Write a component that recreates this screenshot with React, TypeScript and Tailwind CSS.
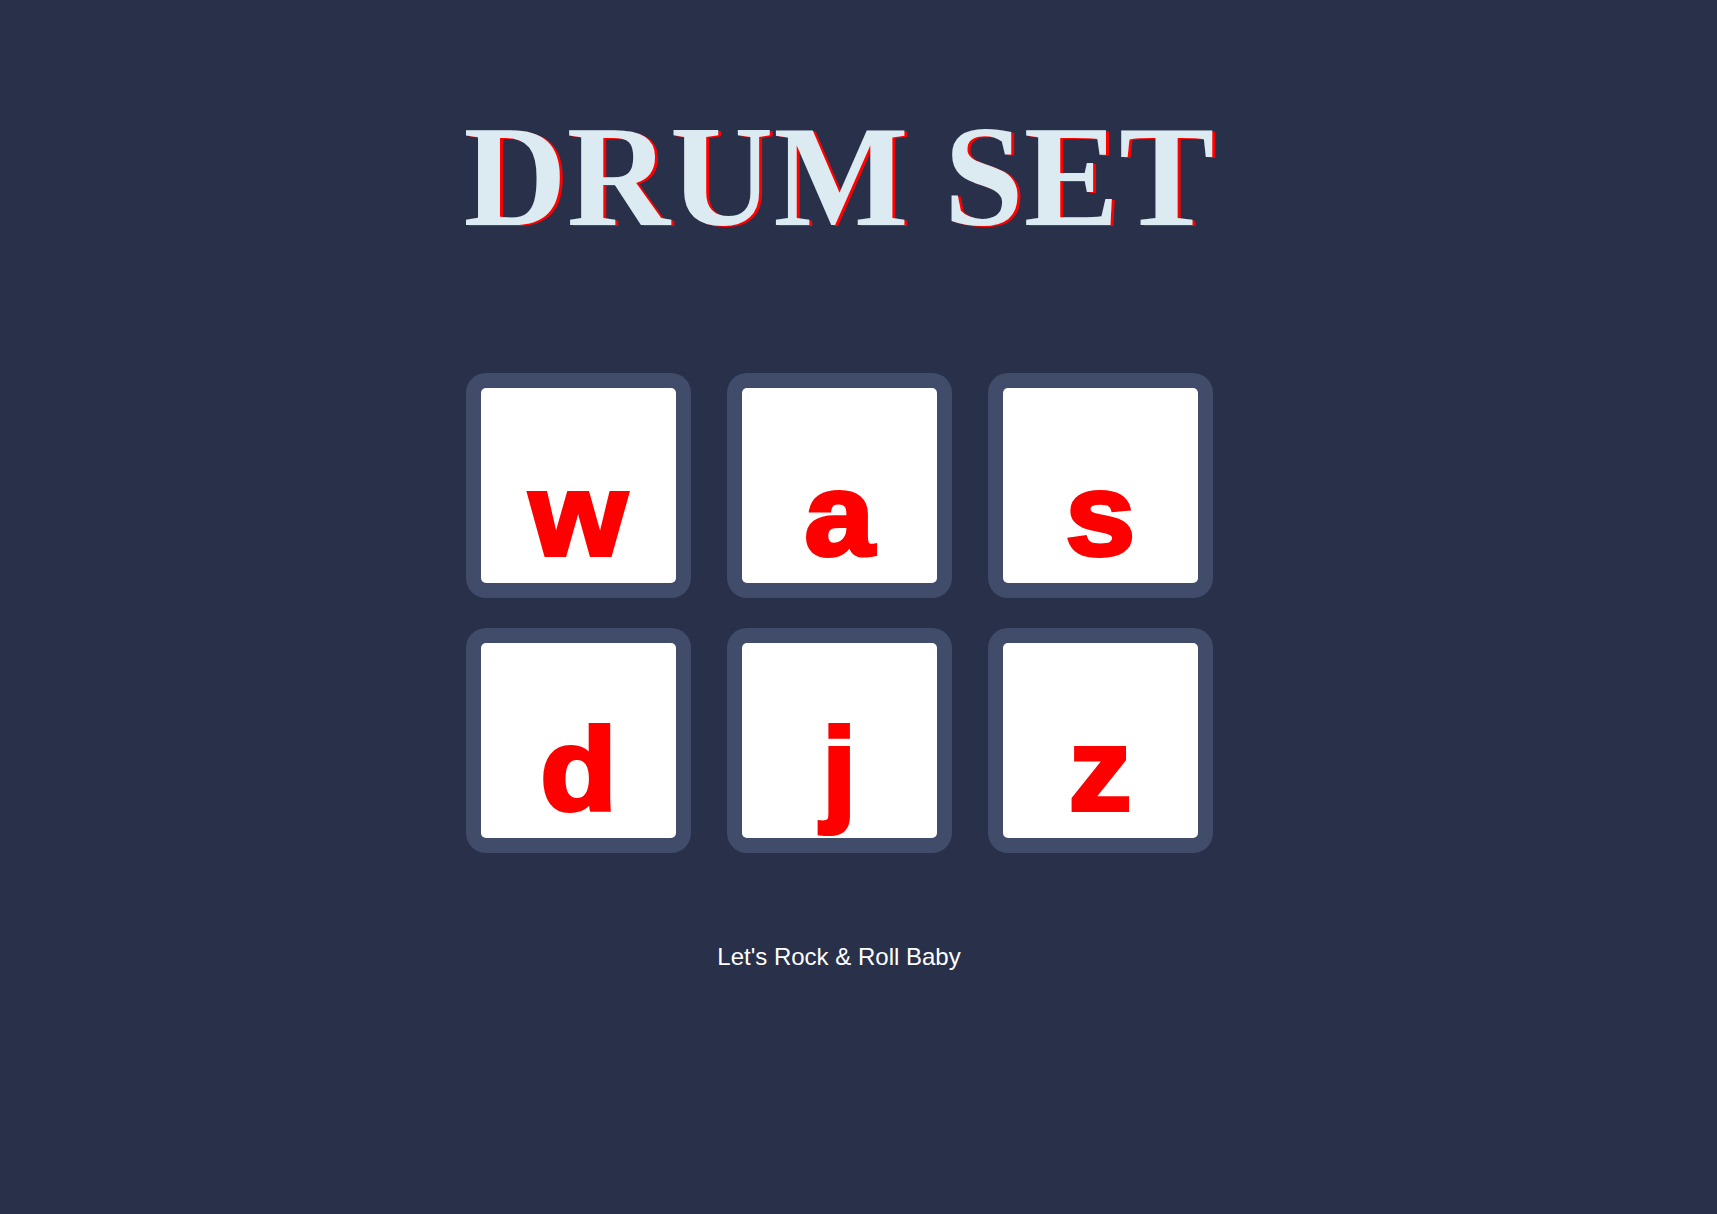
import React from "react";

const keys = ["w", "a", "s", "d", "j", "z"];

function DrumPad({ letter }: { letter: string }) {
  return (
    <button className="w-[225px] h-[225px] rounded-[20px] bg-[#414c6a] p-[15px] outline-none">
      <div className="w-full h-full rounded-[5px] bg-white flex items-end justify-center pb-[10px]">
        <span className="text-[116px] leading-none font-bold text-[#ff0000] scale-x-[1.08] [-webkit-text-stroke:4px_#ff0000] [font-family:'Liberation_Sans',Arial,sans-serif]">
          {letter}
        </span>
      </div>
    </button>
  );
}

export default function App() {
  return (
    <div className="min-h-screen w-full bg-[#29304a] flex flex-col items-center pr-[39px]">
      {/* Title */}
      <h1 className="mt-[106px] text-[143px] leading-none font-bold text-[#dbebf1] [text-shadow:3px_1px_0_#ff0000] [font-family:'Liberation_Serif','Times_New_Roman',serif]">
        DRUM SET
      </h1>

      {/* Pads */}
      <div className="mt-[124px] grid grid-cols-3 gap-x-[36px] gap-y-[30px]">
        {keys.map((k) => (
          <DrumPad key={k} letter={k} />
        ))}
      </div>

      <p className="mt-[92px] text-2xl leading-none text-white [font-family:'Liberation_Sans',Arial,sans-serif]">
        Let's Rock &amp; Roll Baby
      </p>
    </div>
  );
}
